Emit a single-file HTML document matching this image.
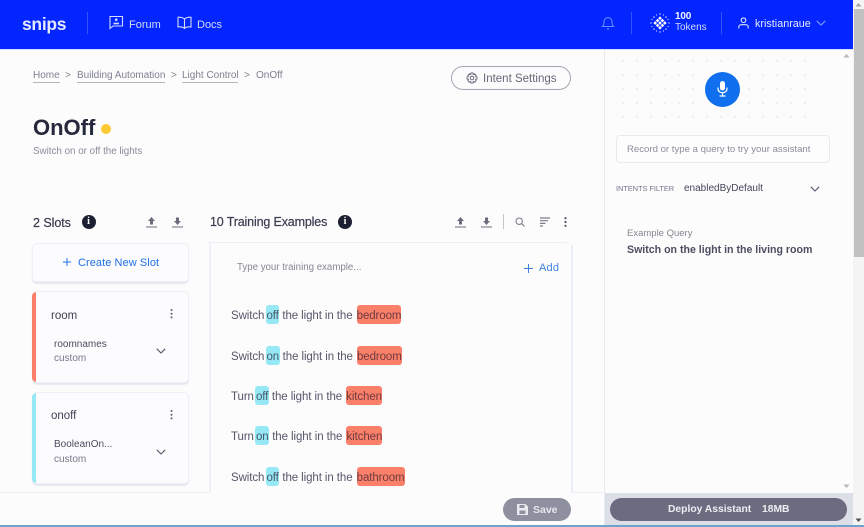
<!DOCTYPE html>
<html><head><meta charset="utf-8">
<style>
html,body{margin:0;padding:0;width:864px;height:527px;overflow:hidden;background:#fcfcfd}
body{position:relative;font-family:"Liberation Sans",sans-serif;color:#3e3f52}
.a{position:absolute}
.t{position:absolute;white-space:nowrap;line-height:16px}
svg{position:absolute;display:block;overflow:visible}
.card{position:absolute;background:#fcfcfe;border:1px solid #eef0f5;border-radius:5px;box-shadow:0 2px 1px #e6e8f0;box-sizing:border-box}
.ex{position:absolute;left:231px;height:20px;line-height:20px;font-size:11.5px;color:#565769;white-space:nowrap;letter-spacing:-.09px}
.c{display:inline-block;line-height:14px;padding:4px .5px 1px;background:#97e8f5;border-radius:3px;color:#46566a;margin-left:-1.5px}
.r{display:inline-block;line-height:14px;padding:4px 0 1px;background:#fb806a;border-radius:3px;color:#6e3a3f;margin-left:1px}
</style></head><body>
<!-- header -->
<div class="a" style="left:0;top:0;width:853px;height:49px;background:#0325ff"></div>
<div class="t" style="left:22px;top:13px;font-size:17.500px;line-height:22px;font-weight:bold;color:#e4e9ff;letter-spacing:-.3px">snips</div>
<div class="a" style="left:87px;top:12px;width:1px;height:22px;background:#3554f5"></div>
<svg style="left:109px;top:15px" width="15" height="15" viewBox="0 0 15 15" fill="none" stroke="#d5dcff" stroke-width="1.1"><path d="M1 1.500h12.500v9.500H4L1 13.500z"/><circle cx="7.200" cy="4.700" r="1.300" fill="#d5dcff" stroke="none"/><path d="M4.500 8.500h5.500" stroke-width="1.600"/></svg>
<div class="t" style="left:129px;top:17px;font-size:11px;color:#d5dcff">Forum</div>
<svg style="left:177px;top:16px" width="15" height="14" viewBox="0 0 15 14" fill="none" stroke="#d5dcff" stroke-width="1.1"><path d="M7.500 3C6 1.500 3 1 1 1.300v9.700c2 -.3 5 0 6.500 1.500c1.500-1.500 4.500-1.800 6.500-1.500V1.300C12 1 9 1.500 7.500 3zM7.500 3v9.500"/></svg>
<div class="t" style="left:197px;top:17px;font-size:11px;color:#d5dcff">Docs</div>
<svg style="left:601px;top:16px" width="14" height="15" viewBox="0 0 14 15" fill="none" stroke="#5f8cff" stroke-width="1.1"><path d="M1.500 10.500c1.200-1 1.500-2 1.500-4.500c0-2.500 1.600-4.300 4-4.300s4 1.800 4 4.300c0 2.500 .3 3.500 1.500 4.500z"/><path d="M6 13h2" stroke-width="1.400"/></svg>
<div class="a" style="left:631px;top:12px;width:1px;height:22px;background:#3554f5"></div>
<svg style="left:650px;top:13px" width="20" height="20" viewBox="0 0 20 20" fill="#fff"><g fill="#fff" transform="rotate(45 10 10)"><rect x="5.300" y="5.300" width="2.600" height="2.600"/><rect x="8.700" y="5.300" width="2.600" height="2.600"/><rect x="12.100" y="5.300" width="2.600" height="2.600"/><rect x="5.300" y="8.700" width="2.600" height="2.600"/><rect x="8.700" y="8.700" width="2.600" height="2.600"/><rect x="12.100" y="8.700" width="2.600" height="2.600"/><rect x="5.300" y="12.100" width="2.600" height="2.600"/><rect x="8.700" y="12.100" width="2.600" height="2.600"/><rect x="12.100" y="12.100" width="2.600" height="2.600"/></g><g fill="#cfd8ff"><circle cx="10" cy="1" r=".7"/><circle cx="10" cy="19" r=".7"/><circle cx="1" cy="10" r=".7"/><circle cx="19" cy="10" r=".7"/><circle cx="4" cy="4" r=".8"/><circle cx="16" cy="4" r=".8"/><circle cx="4" cy="16" r=".8"/><circle cx="16" cy="16" r=".8"/><circle cx="6.500" cy="2" r=".6"/><circle cx="13.500" cy="2" r=".6"/><circle cx="6.500" cy="18" r=".6"/><circle cx="13.500" cy="18" r=".6"/><circle cx="2" cy="6.500" r=".6"/><circle cx="2" cy="13.500" r=".6"/><circle cx="18" cy="6.500" r=".6"/><circle cx="18" cy="13.500" r=".6"/></g></svg>
<div class="t" style="left:675px;top:10px;font-size:10px;font-weight:bold;color:#f2f4ff;line-height:14px;letter-spacing:-.2px">100</div>
<div class="t" style="left:675px;top:21px;font-size:10px;color:#d5dcff;line-height:14px">Tokens</div>
<div class="a" style="left:721px;top:12px;width:1px;height:22px;background:#3554f5"></div>
<svg style="left:738px;top:17px" width="11" height="13" viewBox="0 0 11 13" fill="none" stroke="#dfe4ff" stroke-width="1.100"><circle cx="5.500" cy="3.200" r="2.300"/><path d="M.8 11.500V10c0-1.300 1-2.300 2.300-2.300h4.800c1.300 0 2.300 1 2.300 2.300v1.500"/></svg>
<div class="t" style="left:755px;top:16px;font-size:10.800px;color:#e6eaff">kristianraue</div>
<svg style="left:816px;top:20px" width="10" height="6" viewBox="0 0 10 6" fill="none" stroke="#7f9bff" stroke-width="1.100"><path d="M.7 .8L5 5l4.300-4.200"/></svg>
<div class="a" style="left:0;top:49px;width:853px;height:1px;background:#d6dcfb"></div>

<!-- breadcrumb -->
<div class="t" style="left:33px;top:67px;font-size:10px;color:#7f8090;border-bottom:1px solid #b4b5bf;line-height:17px;height:15px">Home</div>
<div class="t" style="left:65px;top:68px;font-size:10px;color:#85868f">&gt;</div>
<div class="t" style="left:77px;top:67px;font-size:10px;color:#7f8090;border-bottom:1px solid #b4b5bf;line-height:17px;height:15px;width:88px">Building Automation</div>
<div class="t" style="left:171px;top:68px;font-size:10px;color:#85868f">&gt;</div>
<div class="t" style="left:182px;top:67px;font-size:10px;color:#7f8090;border-bottom:1px solid #b4b5bf;line-height:17px;height:15px;width:56px">Light Control</div>
<div class="t" style="left:244px;top:68px;font-size:10px;color:#85868f">&gt;</div>
<div class="t" style="left:256px;top:68px;font-size:10px;color:#7f8090">OnOff</div>

<div class="t" style="left:33px;top:116px;font-size:22px;line-height:24px;font-weight:bold;color:#26283c">OnOff</div>
<div class="a" style="left:101px;top:124px;width:10px;height:10px;border-radius:50%;background:#ffc933"></div>
<div class="t" style="left:33px;top:144px;font-size:9.800px;color:#8a8b98">Switch on or off the lights</div>

<!-- intent settings -->
<div class="a" style="left:451px;top:66px;width:120px;height:24px;box-sizing:border-box;border:1px solid #a5a6b2;border-radius:12px;background:#fcfcfd"></div>
<svg style="left:466px;top:72px" width="12" height="12" viewBox="0 0 12 12" fill="none" stroke="#6c6d7d" stroke-width="1"><circle cx="6" cy="6" r="1.800"/><path d="M5 1h2l.3 1.500 1.400-.6 1.400 1.400-.7 1.300L11 5v2l-1.500.4.600 1.300-1.400 1.400-1.300-.6L7 11H5l-.4-1.500-1.300.6-1.400-1.400.6-1.300L1 7V5l1.500-.4-.6-1.300 1.400-1.400 1.300.6z"/></svg>
<div class="t" style="left:483px;top:71px;font-size:11.500px;color:#666778">Intent Settings</div>

<!-- slots header -->
<div class="t" style="left:33px;top:215px;font-size:12.500px;color:#3a3b4e;letter-spacing:-.05px;-webkit-text-stroke:.2px #3a3b4e">2 Slots</div>
<div class="a" style="left:81.500px;top:215px;width:14px;height:14px;border-radius:50%;background:#1d1f33;color:#fff;font:bold 10px/14px 'Liberation Serif',serif;text-align:center">i</div>
<svg style="left:146px;top:216px" width="11" height="12" viewBox="0 0 11 12" fill="#6b6c7c"><path d="M5.500 1L9 5H7v3.500H4V5H2z"/><rect y="10.500" width="11" height="1"/></svg>
<svg style="left:172px;top:216px" width="11" height="12" viewBox="0 0 11 12" fill="#6b6c7c"><path d="M5.500 9L9 5H7V1.500H4V5H2z"/><rect y="10.500" width="11" height="1"/></svg>
<div class="t" style="left:210px;top:214px;font-size:12.500px;color:#3a3b4e;letter-spacing:-.15px;-webkit-text-stroke:.2px #3a3b4e">10 Training Examples</div>
<div class="a" style="left:338px;top:215px;width:14px;height:14px;border-radius:50%;background:#1d1f33;color:#fff;font:bold 10px/14px 'Liberation Serif',serif;text-align:center">i</div>
<svg style="left:455px;top:216px" width="11" height="12" viewBox="0 0 11 12" fill="#6b6c7c"><path d="M5.500 1L9 5H7v3.500H4V5H2z"/><rect y="10.500" width="11" height="1"/></svg>
<svg style="left:481px;top:216px" width="11" height="12" viewBox="0 0 11 12" fill="#6b6c7c"><path d="M5.500 9L9 5H7V1.500H4V5H2z"/><rect y="10.500" width="11" height="1"/></svg>
<div class="a" style="left:503px;top:214px;width:1px;height:15px;background:#c4c5cd"></div>
<svg style="left:515px;top:217px" width="10" height="10" viewBox="0 0 10 10" fill="none" stroke="#7c7d8b" stroke-width="1.100"><circle cx="4.200" cy="4.200" r="3.200"/><path d="M6.600 6.600L9.500 9.500"/></svg>
<svg style="left:540px;top:217px" width="10" height="10" viewBox="0 0 10 10" fill="none" stroke="#7c7d8b" stroke-width="1.200"><path d="M0 1h10M0 3.700h8M0 6.400h5.500M0 9h3"/></svg>
<svg style="left:564px;top:217px" width="3" height="10" viewBox="0 0 3 10" fill="#4f5063"><circle cx="1.500" cy="1.200" r="1.100"/><circle cx="1.500" cy="5" r="1.100"/><circle cx="1.500" cy="8.800" r="1.100"/></svg>

<!-- left cards -->
<div class="card" style="left:32px;top:243px;width:157px;height:39px"></div>
<svg style="left:63px;top:258px" width="8" height="8" viewBox="0 0 8 8" stroke="#1f6fe8" stroke-width="1"><path d="M4 0v8M0 4h8"/></svg>
<div class="t" style="left:78px;top:255px;font-size:11px;line-height:17px;color:#1f6fe8;letter-spacing:.07px">Create New Slot</div>

<div class="card" style="left:32px;top:291px;width:157px;height:92px;border-left:0;overflow:hidden"><div class="a" style="left:0;top:0;width:4px;height:100%;background:#fb806a"></div></div>
<div class="t" style="left:51px;top:308px;font-size:11.500px;color:#3e3f52">room</div>
<svg style="left:170px;top:309px" width="3" height="10" viewBox="0 0 3 10" fill="#5c5d6f"><circle cx="1.500" cy="1" r="1"/><circle cx="1.500" cy="4.700" r="1"/><circle cx="1.500" cy="8.400" r="1"/></svg>
<div class="t" style="left:54px;top:337px;font-size:10px;color:#4c4d60">roomnames</div>
<div class="t" style="left:54px;top:351px;font-size:10px;color:#75768a">custom</div>
<svg style="left:156px;top:348px" width="10" height="6" viewBox="0 0 10 6" fill="none" stroke="#55566a" stroke-width="1.100"><path d="M.8 .8L5 5l4.200-4.200"/></svg>

<div class="card" style="left:32px;top:392px;width:157px;height:92px;border-left:0;overflow:hidden"><div class="a" style="left:0;top:0;width:4px;height:100%;background:#97e8f5"></div></div>
<div class="t" style="left:51px;top:408px;font-size:11.500px;color:#3e3f52">onoff</div>
<svg style="left:170px;top:410px" width="3" height="10" viewBox="0 0 3 10" fill="#5c5d6f"><circle cx="1.500" cy="1" r="1"/><circle cx="1.500" cy="4.700" r="1"/><circle cx="1.500" cy="8.400" r="1"/></svg>
<div class="t" style="left:54px;top:437px;font-size:10px;color:#4c4d60">BooleanOn...</div>
<div class="t" style="left:54px;top:452px;font-size:10px;color:#75768a">custom</div>
<svg style="left:156px;top:449px" width="10" height="6" viewBox="0 0 10 6" fill="none" stroke="#55566a" stroke-width="1.100"><path d="M.8 .8L5 5l4.200-4.200"/></svg>

<!-- training panel -->
<div class="a" style="left:209px;top:242px;width:358px;height:1px;background:#eceef3"></div>
<div class="a" style="left:209px;top:243px;width:2px;height:249px;background:#eef0f5"></div>
<div class="a" style="left:571px;top:245px;width:2px;height:247px;background:#eaeef6"></div>
<div class="t" style="left:237px;top:260px;font-size:9.700px;color:#868794">Type your training example...</div>
<svg style="left:524px;top:264px" width="9" height="9" viewBox="0 0 9 9" stroke="#3f7fe0" stroke-width="1"><path d="M4.500 0v9M0 4.500h9"/></svg>
<div class="t" style="left:539px;top:260px;font-size:11px;color:#3f7fe0;letter-spacing:.2px">Add</div>

<div class="ex" style="top:305px">Switch <span class="c">off</span> the light in the <span class="r">bedroom</span></div>
<div class="ex" style="top:346px">Switch <span class="c">on</span> the light in the <span class="r">bedroom</span></div>
<div class="ex" style="top:386px">Turn <span class="c">off</span> the light in the <span class="r">kitchen</span></div>
<div class="ex" style="top:426px">Turn <span class="c">on</span> the light in the <span class="r">kitchen</span></div>
<div class="ex" style="top:467px">Switch <span class="c">off</span> the light in the <span class="r">bathroom</span></div>

<!-- footer -->
<div class="a" style="left:0;top:492px;width:604px;height:33px;background:#fcfcfd"></div>
<div class="a" style="left:0;top:492px;width:210px;height:1px;background:#eceef3"></div>
<div class="a" style="left:572px;top:492px;width:32px;height:1px;background:#eceef3"></div>
<div class="a" style="left:503px;top:498px;width:68px;height:23px;border-radius:12px;background:#8f909f"></div>
<svg style="left:517px;top:504px" width="11" height="11" viewBox="0 0 11 11" fill="#e9eaf0"><path d="M0 0h8.500L11 2.500V11H0z"/><rect x="2.500" y="1" width="5" height="3" fill="#8f909f"/><rect x="2.500" y="6.500" width="6" height="3.500" fill="#8f909f"/></svg>
<div class="t" style="left:533px;top:502px;font-size:10.500px;font-weight:bold;color:#e6e7ee">Save</div>

<!-- right panel -->
<div class="a" style="left:604px;top:50px;width:1px;height:475px;background:#e8eaf0"></div>
<svg style="left:620px;top:58px" width="190" height="62"><g fill="#d8d9e0"><circle cx="3" cy="3" r=".7"/><circle cx="17" cy="3" r=".7"/><circle cx="31" cy="3" r=".7"/><circle cx="45" cy="3" r=".7"/><circle cx="59" cy="3" r=".7"/><circle cx="73" cy="3" r=".7"/><circle cx="87" cy="3" r=".7"/><circle cx="101" cy="3" r=".7"/><circle cx="115" cy="3" r=".7"/><circle cx="129" cy="3" r=".7"/><circle cx="143" cy="3" r=".7"/><circle cx="157" cy="3" r=".7"/><circle cx="171" cy="3" r=".7"/><circle cx="185" cy="3" r=".7"/><circle cx="3" cy="17" r=".7"/><circle cx="17" cy="17" r=".7"/><circle cx="31" cy="17" r=".7"/><circle cx="45" cy="17" r=".7"/><circle cx="59" cy="17" r=".7"/><circle cx="73" cy="17" r=".7"/><circle cx="129" cy="17" r=".7"/><circle cx="143" cy="17" r=".7"/><circle cx="157" cy="17" r=".7"/><circle cx="171" cy="17" r=".7"/><circle cx="185" cy="17" r=".7"/><circle cx="3" cy="31" r=".7"/><circle cx="17" cy="31" r=".7"/><circle cx="31" cy="31" r=".7"/><circle cx="45" cy="31" r=".7"/><circle cx="59" cy="31" r=".7"/><circle cx="73" cy="31" r=".7"/><circle cx="129" cy="31" r=".7"/><circle cx="143" cy="31" r=".7"/><circle cx="157" cy="31" r=".7"/><circle cx="171" cy="31" r=".7"/><circle cx="185" cy="31" r=".7"/><circle cx="3" cy="45" r=".7"/><circle cx="17" cy="45" r=".7"/><circle cx="31" cy="45" r=".7"/><circle cx="45" cy="45" r=".7"/><circle cx="59" cy="45" r=".7"/><circle cx="73" cy="45" r=".7"/><circle cx="129" cy="45" r=".7"/><circle cx="143" cy="45" r=".7"/><circle cx="157" cy="45" r=".7"/><circle cx="171" cy="45" r=".7"/><circle cx="185" cy="45" r=".7"/><circle cx="3" cy="59" r=".7"/><circle cx="17" cy="59" r=".7"/><circle cx="31" cy="59" r=".7"/><circle cx="45" cy="59" r=".7"/><circle cx="59" cy="59" r=".7"/><circle cx="73" cy="59" r=".7"/><circle cx="87" cy="59" r=".7"/><circle cx="101" cy="59" r=".7"/><circle cx="115" cy="59" r=".7"/><circle cx="129" cy="59" r=".7"/><circle cx="143" cy="59" r=".7"/><circle cx="157" cy="59" r=".7"/><circle cx="171" cy="59" r=".7"/><circle cx="185" cy="59" r=".7"/></g></svg>
<div class="a" style="left:705px;top:72px;width:35px;height:35px;border-radius:50%;background:#0f6fee"></div>
<svg style="left:717px;top:81px" width="11" height="16" viewBox="0 0 11 16" fill="none" stroke="#fff" stroke-width="1.200"><rect x="3" y="0" width="5" height="9.500" rx="2.500" fill="#fff" stroke="none"/><path d="M1 6.500v1.200c0 2.500 2 4 4.500 4s4.500-1.500 4.500-4V6.500M5.500 11.700v3M2.500 15h6"/></svg>
<div class="a" style="left:616px;top:135px;width:214px;height:28px;box-sizing:border-box;border:1px solid #e9eaf0;border-radius:4px;background:#fdfdfe"></div>
<div class="t" style="left:627px;top:142px;font-size:9.600px;color:#8b8c99">Record or type a query to try your assistant</div>
<div class="t" style="left:616px;top:181px;font-size:7.500px;color:#75768a;letter-spacing:-.1px">INTENTS FILTER</div>
<div class="t" style="left:684px;top:181px;font-size:10px;color:#45465a">enabledByDefault</div>
<svg style="left:810px;top:186px" width="10" height="6" viewBox="0 0 10 6" fill="none" stroke="#55566a" stroke-width="1.100"><path d="M.8 .8L5 5l4.200-4.200"/></svg>
<div class="t" style="left:627px;top:226px;font-size:9.500px;color:#85868f">Example Query</div>
<div class="t" style="left:627px;top:242px;font-size:10.600px;font-weight:bold;color:#4c4d60">Switch on the light in the living room</div>

<div class="a" style="left:605px;top:493px;width:248px;height:32px;background:#dcdee8"></div>
<div class="a" style="left:610px;top:498px;width:237px;height:23px;border-radius:12px;background:#6b6c80"></div>
<div class="t" style="left:668px;top:502px;font-size:10.300px;font-weight:bold;color:#eceef2">Deploy Assistant</div>
<div class="t" style="left:762px;top:502px;font-size:10.300px;font-weight:bold;color:#eceef2">18MB</div>

<!-- inner scroll arrows -->
<svg style="left:843px;top:53px" width="7" height="5"><path d="M.5 4.500L3.500 1l3 3.500z" fill="#b5b5bd"/></svg>
<svg style="left:843px;top:484px" width="7" height="5"><path d="M.5 .5L3.500 4l3-3.500z" fill="#b5b5bd"/></svg>

<!-- page scrollbar -->
<div class="a" style="left:853px;top:0;width:11px;height:525px;background:#f4f4f4"></div>
<div class="a" style="left:854px;top:9px;width:10px;height:248px;background:#c1c1c1"></div>
<svg style="left:855px;top:2px" width="7" height="5"><path d="M.5 4.500L3.500 1l3 3.500z" fill="#a3a3a3"/></svg>
<svg style="left:855px;top:518px" width="7" height="5"><path d="M.5 .5L3.500 4l3-3.500z" fill="#505050"/></svg>
<div class="a" style="left:0;top:525px;width:864px;height:2px;background:#6fa3c9"></div>
</body></html>
